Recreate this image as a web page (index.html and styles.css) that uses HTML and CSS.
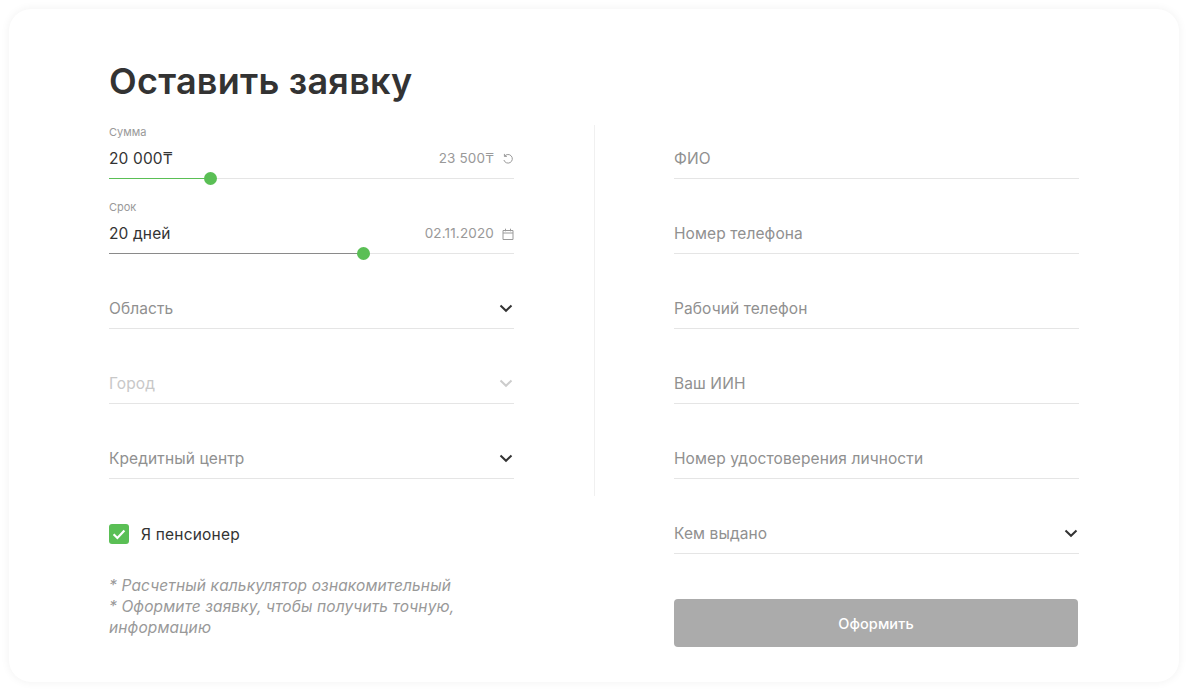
FILE: index.html
```html
<!DOCTYPE html>
<html lang="ru">
<head>
<meta charset="utf-8">
<title>Оставить заявку</title>
<link rel="stylesheet" href="styles.css">
</head>
<body>
<main class="card">
  <h1 class="title">Оставить заявку</h1>
  <form class="form">
    <div class="field slider-field">
      <span class="caption">Сумма</span>
      <div class="row"><span class="value">20 000₸</span><span class="hint">23 500₸<svg class="icon" viewBox="0 0 12 12"><path d="M2.6 3.2A4.3 4.3 0 1 1 1.9 7M2.4 .9v2.5h2.5" fill="none" stroke="#9a9a9a" stroke-width="1"/></svg></span></div>
      <div class="track"><div class="fill fill-green fill-sum"></div><div class="thumb"></div></div>
    </div>
    <div class="divider"></div>
    <div class="field"><span class="label">ФИО</span></div>

    <div class="field slider-field">
      <span class="caption">Срок</span>
      <div class="row"><span class="value">20 дней</span><span class="hint">02.11.2020<svg class="icon" viewBox="0 0 12 12"><path d="M1 2.5h10v9H1zM1 5h10M3.5 .7v2.6M8.5 .7v2.6" fill="none" stroke="#9a9a9a" stroke-width="1"/></svg></span></div>
      <div class="track"><div class="fill fill-grey fill-term"></div><div class="thumb"></div></div>
    </div>
    <div class="field"><span class="label">Номер телефона</span></div>

    <div class="field"><span class="label">Область</span><svg class="chevron" viewBox="0 0 14 9"><path d="M1.5 1.5 7 6.8l5.5-5.3" fill="none" stroke="#333" stroke-width="2"/></svg></div>
    <div class="field"><span class="label">Рабочий телефон</span></div>

    <div class="field"><span class="label label-off">Город</span><svg class="chevron" viewBox="0 0 14 9"><path d="M1.5 1.5 7 6.8l5.5-5.3" fill="none" stroke="#ccc" stroke-width="2"/></svg></div>
    <div class="field"><span class="label">Ваш ИИН</span></div>

    <div class="field"><span class="label">Кредитный центр</span><svg class="chevron" viewBox="0 0 14 9"><path d="M1.5 1.5 7 6.8l5.5-5.3" fill="none" stroke="#333" stroke-width="2"/></svg></div>
    <div class="field"><span class="label">Номер удостоверения личности</span></div>

    <label class="check"><span class="box"><svg viewBox="0 0 20 20"><path d="M4.6 10.2l3.8 3.8L15.4 6.6" fill="none" stroke="#fff" stroke-width="2.2"/></svg></span>Я пенсионер</label>
    <div class="field field-right"><span class="label">Кем выдано</span><svg class="chevron" viewBox="0 0 14 9"><path d="M1.5 1.5 7 6.8l5.5-5.3" fill="none" stroke="#333" stroke-width="2"/></svg></div>

    <p class="note">* Расчетный калькулятор ознакомительный<br>* Оформите заявку, чтобы получить точную, информацию</p>
    <button class="submit" type="button">Оформить</button>
  </form>
</main>
</body>
</html>
```
FILE: styles.css
```css
* { box-sizing: border-box; }
html, body { margin: 0; height: 100%; }
body {
  background: #fff;
  padding: 9px;
  font-family: Inter, "Noto Sans", sans-serif;
  color: #333;
  overflow: hidden;
}
.card {
  width: 1170px;
  height: 673px;
  background: #fff;
  border-radius: 22px;
  box-shadow: 0 0 10px rgba(0,0,0,.06);
  padding: 50px 100px 0;
}
.title {
  margin: 0;
  font-size: 36px;
  line-height: 45px;
  font-weight: 600;
  letter-spacing: .25px;
  color: #333;
}
.form {
  display: grid;
  grid-template-columns: 405px 405px;
  column-gap: 160px;
  grid-auto-rows: 75px;
  position: relative;
}
.field {
  position: relative;
  height: 75px;
  display: flex;
  align-items: flex-end;
  justify-content: space-between;
  border-bottom: 1px solid #e5e5e5;
  padding-bottom: 9px;
}
.slider-field { display: block; padding: 0; }
.divider {
  position: absolute;
  left: 485px;
  top: 21px;
  height: 371px;
  width: 1px;
  background: #f0f0f0;
}
.label { font-size: 15.5px; letter-spacing: .1px; line-height: 20px; color: #909090; }
.label-off { color: #c8c8c8; }
.chevron { width: 14px; height: 9px; margin: 0 1px 6px 0; }
.caption {
  display: block;
  font-size: 11px;
  line-height: 14px;
  color: #999;
  padding-top: 21px;
}
.row {
  display: flex;
  justify-content: space-between;
  align-items: center;
  height: 20px;
  margin-top: 9px;
}
.value { font-size: 15.5px; letter-spacing: .13px; color: #333; }
.hint { display: flex; align-items: center; gap: 8px; font-size: 13.5px; letter-spacing: .15px; color: #999; }
.icon { width: 12px; height: 12px; margin-top: 2px; }
.track { position: absolute; left: 0; right: 0; bottom: -1px; height: 1px; }
.fill { position: absolute; left: 0; top: 0; height: 1px; }
.fill-green { background: #5abf55; }
.fill-grey { background: #8a8a8a; }
.fill-sum { width: 101px; }
.fill-term { width: 254px; }
.thumb {
  position: absolute;
  top: -6px;
  width: 13px;
  height: 13px;
  border-radius: 50%;
  background: #5abf55;
}
.fill-sum + .thumb { left: 95px; }
.fill-term + .thumb { left: 248px; }
.check {
  display: flex;
  align-items: center;
  gap: 12px;
  font-size: 15.5px;
  letter-spacing: .2px;
  color: #333;
  height: 75px;
  padding-top: 35px;
}
.box {
  width: 20px;
  height: 20px;
  border-radius: 3px;
  background: #5abf55;
  display: block;
}
.box svg { display: block; width: 20px; height: 20px; }
.note {
  margin: 21px 0 0;
  font-size: 15.5px;
  letter-spacing: .13px;
  line-height: 21px;
  font-style: italic;
  color: #999;
}
.submit {
  margin-top: 45px;
  height: 48px;
  width: 404px;
  border: 0;
  border-radius: 4px;
  background: #ababab;
  color: #fff;
  font: 500 14.5px Inter, sans-serif;
  letter-spacing: .1px;
}
```
